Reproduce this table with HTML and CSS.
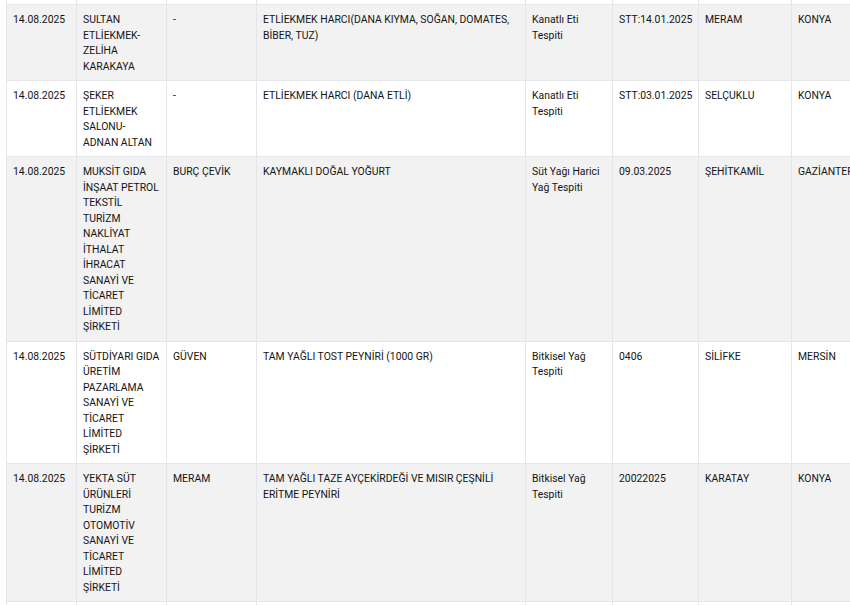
FILE: index.html
```html
<!DOCTYPE html>
<html lang="tr">
<head>
<meta charset="utf-8">
<title>Tablo</title>
<link rel="stylesheet" href="styles.css">
</head>
<body>
<div class="wrap">
<table class="list">
  <colgroup>
    <col class="c-date"><col class="c-firm"><col class="c-brand"><col class="c-product">
    <col class="c-test"><col class="c-lot"><col class="c-district"><col class="c-city">
  </colgroup>
  <tbody>
    <tr class="stub"><td></td><td></td><td></td><td></td><td></td><td></td><td></td><td></td></tr>
    <tr class="alt">
      <td>14.08.2025</td>
      <td>SULTAN ETLİEKMEK-ZELİHA KARAKAYA</td>
      <td>-</td>
      <td>ETLİEKMEK HARCI(DANA KIYMA, SOĞAN, DOMATES, BİBER, TUZ)</td>
      <td>Kanatlı Eti Tespiti</td>
      <td class="lot">STT:14.01.2025</td>
      <td>MERAM</td>
      <td>KONYA</td>
    </tr>
    <tr>
      <td>14.08.2025</td>
      <td>ŞEKER ETLİEKMEK SALONU-<br>ADNAN ALTAN</td>
      <td>-</td>
      <td>ETLİEKMEK HARCI (DANA ETLİ)</td>
      <td>Kanatlı Eti Tespiti</td>
      <td class="lot">STT:03.01.2025</td>
      <td>SELÇUKLU</td>
      <td>KONYA</td>
    </tr>
    <tr class="alt">
      <td>14.08.2025</td>
      <td>MUKSİT GIDA İNŞAAT PETROL TEKSTİL TURİZM NAKLİYAT İTHALAT İHRACAT SANAYİ VE TİCARET LİMİTED ŞİRKETİ</td>
      <td>BURÇ ÇEVİK</td>
      <td>KAYMAKLI DOĞAL YOĞURT</td>
      <td>Süt Yağı Harici Yağ Tespiti</td>
      <td class="lot">09.03.2025</td>
      <td>ŞEHİTKAMİL</td>
      <td>GAZİANTEP</td>
    </tr>
    <tr>
      <td>14.08.2025</td>
      <td>SÜTDİYARI GIDA ÜRETİM PAZARLAMA SANAYİ VE TİCARET LİMİTED ŞİRKETİ</td>
      <td>GÜVEN</td>
      <td>TAM YAĞLI TOST PEYNİRİ (1000 GR)</td>
      <td>Bitkisel Yağ Tespiti</td>
      <td class="lot">0406</td>
      <td>SİLİFKE</td>
      <td>MERSİN</td>
    </tr>
    <tr class="alt">
      <td>14.08.2025</td>
      <td>YEKTA SÜT ÜRÜNLERİ TURİZM OTOMOTİV SANAYİ VE TİCARET LİMİTED ŞİRKETİ</td>
      <td>MERAM</td>
      <td>TAM YAĞLI TAZE AYÇEKİRDEĞİ VE MISIR ÇEŞNİLİ ERİTME PEYNİRİ</td>
      <td>Bitkisel Yağ Tespiti</td>
      <td class="lot">20022025</td>
      <td>KARATAY</td>
      <td>KONYA</td>
    </tr>
    <tr>
      <td>&nbsp;</td>
      <td>&nbsp;</td>
      <td>&nbsp;</td>
      <td>&nbsp;</td>
      <td>&nbsp;</td>
      <td>&nbsp;</td>
      <td>&nbsp;</td>
      <td>&nbsp;</td>
    </tr>
  </tbody>
</table>
</div>
</body>
</html>
```
FILE: styles.css
```css
html, body {
  margin: 0;
  padding: 0;
  background: #ffffff;
  overflow: hidden;
}

.wrap {
  padding-left: 6px;
  width: 900px;
}

.list {
  border-collapse: collapse;
  table-layout: fixed;
  width: 890px;
  font-family: Roboto, "Noto Sans", "Liberation Sans", sans-serif;
  font-size: 10.4px;
  line-height: 15.5px;
  color: #141414;
}

.c-date { width: 70px; }
.c-firm { width: 90px; }
.c-brand { width: 90px; }
.c-product { width: 269px; }
.c-test { width: 87px; }
.c-lot { width: 86px; }
.c-district { width: 93px; }
.c-city { width: 105px; }

.list td {
  border: 1px solid #e4e6e9;
  padding: 7px 5.4px 6px 6px;
  vertical-align: top;
  text-align: left;
  word-wrap: break-word;
}

.list td.lot {
  white-space: nowrap;
}

.list tr.alt td {
  background: #f2f2f2;
}

.list tr.stub td {
  height: 4px;
  padding: 0;
  border-top: none;
}
```
